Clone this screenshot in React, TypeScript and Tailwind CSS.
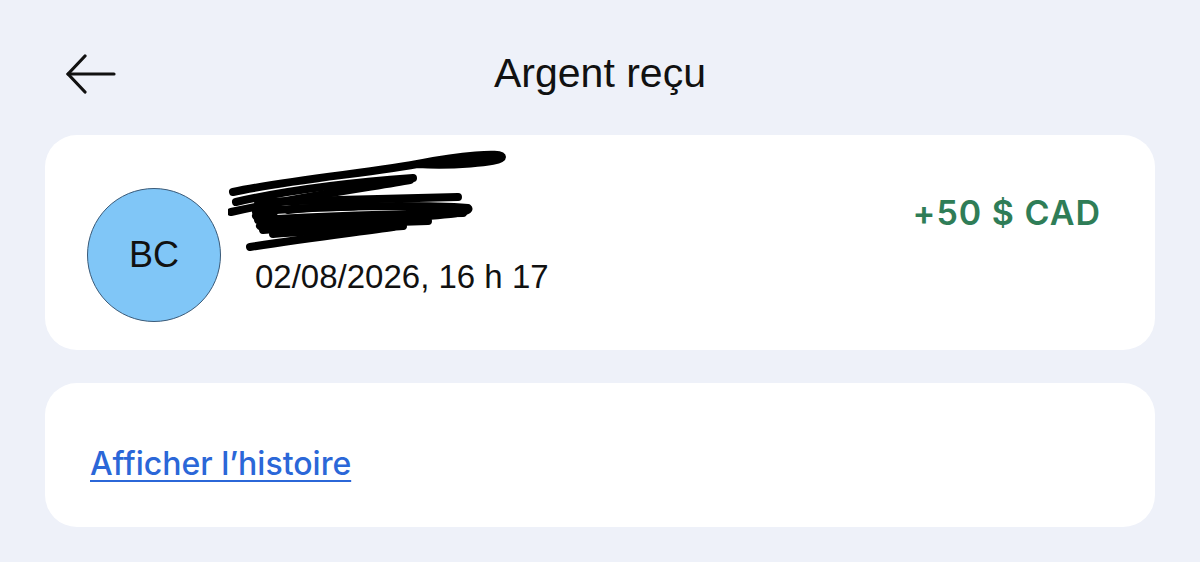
const Scribble = () => (
  <svg width="290" height="110" viewBox="0 0 290 110" fill="none" stroke="#000" strokeWidth="8" strokeLinecap="round" strokeLinejoin="round">
    <path d="M5 42 C60 30 150 22 195 13 C230 6 274 2 274 7 C274 13 218 16 190 14" />
    <path d="M8 52 C60 40 130 32 185 28" />
    <path d="M3 62 C80 45 150 36 182 30" />
    <path d="M30 52 C120 50 200 48 230 47" />
    <path d="M28 62 C90 55 200 55 240 58 C246 63 200 67 150 69" />
    <path d="M30 70 C100 66 170 64 235 63" />
    <path d="M35 80 C100 74 160 72 200 71" />
    <path d="M40 75 C90 70 150 68 190 67" />
    <path d="M22 97 C80 88 130 82 165 77" />
    <path d="M28 66 C45 58 55 62 32 76" />
    <path d="M60 60 C90 56 110 58 130 56" />
    <path d="M45 84 C100 80 150 78 175 76" />
  </svg>
);

const App = () => {
  return (
    <div className="min-h-[562px] w-full bg-[#eef1f9] pb-[35px]">
      <div className="flex items-center px-[66px] pt-[53px] mb-[41px]">
        <svg width="50" height="40" viewBox="0 0 50 40" fill="none" stroke="#111" strokeWidth="3.2" strokeLinecap="round" strokeLinejoin="round">
          <path d="M2 20 H48" />
          <path d="M19 2 L2 20 L19 38" />
        </svg>
        <p className="flex-1 text-center text-[41px] leading-[41px] text-[#111] font-['Liberation_Sans',sans-serif]">
          Argent reçu
        </p>
        <div className="w-[50px]" />
      </div>

      <div className="mx-[45px] flex flex-col gap-[33px]">
        <div className="flex items-start h-[215px] bg-white rounded-[32px] pt-[15px] pl-[42px] pr-[54px]">
          <div className="mt-[38px] w-[134px] h-[134px] rounded-full bg-[#80c6f7] border border-[#3a5a78] flex items-center justify-center shrink-0">
            <span className="text-[36px] leading-none text-[#111] font-['Liberation_Sans',sans-serif]">BC</span>
          </div>
          <div className="ml-[7px] flex flex-col">
            <Scribble />
            <p className="pl-[27px] text-[33px] leading-[33px] text-[#111] font-['Liberation_Sans',sans-serif]">
              02/08/2026, 16 h 17
            </p>
          </div>
          <p className="ml-auto mt-[46px] text-[34px] leading-[34px] font-semibold tracking-[1px] text-[#2f7d57] font-['Inter',sans-serif]">
            +50 $ CAD
          </p>
        </div>

        <div className="h-[144px] bg-white rounded-[32px] pl-[45px] pt-[65px]">
          <a href="#" className="text-[32px] leading-[32px] font-medium text-[#2b67d8] underline underline-offset-[5px] decoration-2 font-['Inter',sans-serif]">
            Afficher l’histoire
          </a>
        </div>
      </div>
    </div>
  );
};

export default App;
